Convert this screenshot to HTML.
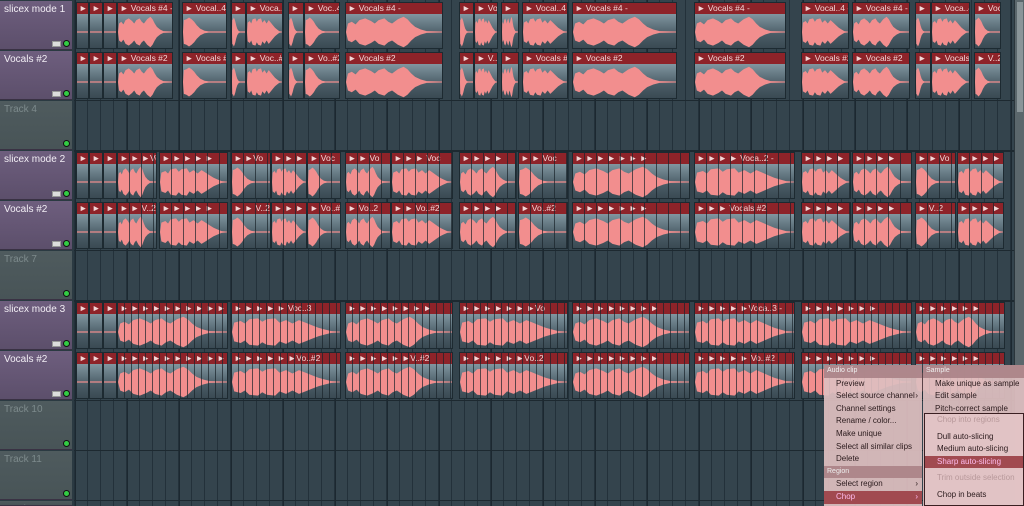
<!DOCTYPE html>
<html style="height:506px;overflow:hidden"><head><meta charset="utf-8"><style>
*{margin:0;padding:0;box-sizing:border-box}
body{width:1024px;height:506px;overflow:hidden;background:#2b3a42;font-family:"Liberation Sans",sans-serif;position:relative}
.hd{position:absolute;left:0;width:72px;height:49px;background:linear-gradient(#6e5e7e,#5c4f6b);border-bottom:1px solid #3a3244;color:#f2eef5;font-size:10px;padding:3px 0 0 4px;overflow:hidden}
.hd.e{background:linear-gradient(#4f5b5e,#485457);color:#7d8a8c}
.hd .k{position:absolute;right:3px;bottom:3px;width:5px;height:5px;border-radius:50%;background:#3c4;box-shadow:0 0 0 1px #111}
.hd .m{position:absolute;right:11px;bottom:2px;width:9px;height:6px;background:#ddd;border:1px solid #999}
.grid{position:absolute;left:74px;top:0;width:940px;height:506px;background:#34444d;
background-image:repeating-linear-gradient(90deg,#23313a 0 1px,transparent 1px 13px),repeating-linear-gradient(90deg,#1c2830 0 2px,transparent 2px 52px)}
.sep{position:absolute;left:74px;width:940px;height:2px;background:#1d2930}
.c{position:absolute;height:47px;background:linear-gradient(#a3b6be 0%,#7a8f99 30%,#4a5c66 70%,#3a4a53 100%);border:1px solid #1d2a31;overflow:hidden}
.c b{display:block;height:11px;background:#8e2329;color:#f3d6d6;font-size:8.5px;font-weight:normal;line-height:11px;padding-left:2px;white-space:nowrap;overflow:hidden}
.c svg{position:absolute;left:0;top:12px;width:100%;height:34px}
.s::after{content:"";position:absolute;left:0;top:0;right:0;bottom:0;background:repeating-linear-gradient(90deg,transparent 0 11px,rgba(25,35,42,.7) 11px 12px)}
.t::after{background:repeating-linear-gradient(90deg,transparent 0 6px,rgba(25,35,42,.7) 6px 7px)}
.sb{position:absolute;left:1014px;top:0;width:10px;height:506px;background:#5b676c;border-left:1px solid #2a353b}
.sb::after{content:"";position:absolute;left:2px;top:2px;width:6px;height:110px;background:#8a9599}
.menu{position:absolute;top:365px;background:rgba(222,190,192,.93);font-size:8px;color:#2a1a1c;font-family:"Liberation Sans",sans-serif;overflow:hidden}
.menu div{height:12.6px;line-height:12.6px;padding-left:12px;white-space:nowrap}
.menu .h{background:rgba(170,130,134,.9);color:#eee;padding-left:3px;font-size:7px}
.menu .d{color:#b8999b}
.menu .on{background:#a14a50;color:#fbe;}
</style></head><body>
<svg width="0" height="0" style="position:absolute">
<symbol id="w1" viewBox="0 0 100 40" preserveAspectRatio="none"><polygon fill="#f28e8e" points="0,20 2,9 8,7 12,10 16,5 24,4 28,8 32,5 40,4 44,9 50,6 56,10 62,6 68,9 74,12 80,15 86,17 92,19 100,19.5 100,20.5 92,21 86,23 80,25 74,28 68,31 62,34 56,30 50,34 44,31 40,36 32,35 28,32 24,36 16,35 12,30 8,33 2,31"/></symbol>
<symbol id="w2" viewBox="0 0 100 40" preserveAspectRatio="none"><polygon fill="#f28e8e" points="0,20 2,6 8,5 14,3 20,5 26,8 32,12 40,16 50,18.5 60,19.3 100,19.3 100,20.7 60,20.7 50,21.5 40,24 32,28 26,32 20,35 14,37 8,35 2,34"/></symbol>
<symbol id="w3" viewBox="0 0 100 40" preserveAspectRatio="none"><polygon fill="#f28e8e" points="0,20 2,10 6,8 10,11 14,6 20,4 26,7 30,10 34,6 40,4 44,8 48,10 54,5 60,2 64,5 68,10 72,14 78,17 84,19 100,19.4 100,20.6 84,21 78,23 72,26 68,30 64,35 60,38 54,35 48,30 44,32 40,36 34,34 30,30 26,33 20,36 14,34 10,29 6,32 2,30"/></symbol>
<symbol id="w0" viewBox="0 0 100 40" preserveAspectRatio="none"><rect fill="#f28e8e" x="0" y="19.3" width="100" height="1.4"/></symbol>
</svg>
<div class="grid"></div>
<div class="sep" style="top:100px;height:1px"></div>
<div class="sep" style="top:150px"></div><div class="sep" style="top:250px;height:1px"></div>
<div class="sep" style="top:300px"></div><div class="sep" style="top:400px;height:1px"></div><div class="sep" style="top:450px;height:1px"></div><div class="sep" style="top:500px;height:1px"></div>

<div class="hd" style="top:1px">slicex mode 1<i class="m"></i><i class="k"></i></div>
<div class="hd" style="top:51px">Vocals #2<i class="m"></i><i class="k"></i></div>
<div class="hd e" style="top:101px">Track 4<i class="k"></i></div>
<div class="hd" style="top:151px">slicex mode 2<i class="m"></i><i class="k"></i></div>
<div class="hd" style="top:201px">Vocals #2<i class="m"></i><i class="k"></i></div>
<div class="hd e" style="top:251px">Track 7<i class="k"></i></div>
<div class="hd" style="top:301px">slicex mode 3<i class="m"></i><i class="k"></i></div>
<div class="hd" style="top:351px">Vocals #2<i class="m"></i><i class="k"></i></div>
<div class="hd e" style="top:401px">Track 10<i class="k"></i></div>
<div class="hd e" style="top:451px">Track 11<i class="k"></i></div>
<div class="hd e" style="top:501px;height:5px">Track 12</div>

<!-- row 1 -->
<div style="position:absolute;top:2px;left:0">
<div class="c" style="left:76px;width:13px"><b>►</b><svg><use href="#w0"/></svg></div>
<div class="c" style="left:89px;width:14px"><b>►</b><svg><use href="#w0"/></svg></div>
<div class="c" style="left:103px;width:14px"><b>►</b><svg><use href="#w0"/></svg></div>
<div class="c" style="left:117px;width:56px"><b>► Vocals #4 -</b><svg><use href="#w3"/></svg></div>
<div class="c" style="left:182px;width:45px"><b>► Vocal..4 -</b><svg><use href="#w2"/></svg></div>
<div class="c" style="left:231px;width:15px"><b>►</b><svg><use href="#w2"/></svg></div>
<div class="c" style="left:246px;width:37px"><b>► Voca..4</b><svg><use href="#w1"/></svg></div>
<div class="c" style="left:288px;width:16px"><b>►</b><svg><use href="#w2"/></svg></div>
<div class="c" style="left:304px;width:36px"><b>► Voc..4</b><svg><use href="#w2"/></svg></div>
<div class="c" style="left:345px;width:98px"><b>► Vocals #4 -</b><svg><use href="#w3"/></svg></div>
<div class="c" style="left:459px;width:15px"><b>►</b><svg><use href="#w2"/></svg></div>
<div class="c" style="left:474px;width:24px"><b>► Vo</b><svg><use href="#w1"/></svg></div>
<div class="c" style="left:501px;width:18px"><b>►</b><svg><use href="#w3"/></svg></div>
<div class="c" style="left:522px;width:46px"><b>► Vocal..4 -</b><svg><use href="#w1"/></svg></div>
<div class="c" style="left:572px;width:105px"><b>► Vocals #4 -</b><svg><use href="#w3"/></svg></div>
<div class="c" style="left:694px;width:92px"><b>► Vocals #4 -</b><svg><use href="#w3"/></svg></div>
<div class="c" style="left:801px;width:48px"><b>► Vocal..4 -</b><svg><use href="#w1"/></svg></div>
<div class="c" style="left:852px;width:58px"><b>► Vocals #4 -</b><svg><use href="#w3"/></svg></div>
<div class="c" style="left:915px;width:16px"><b>►</b><svg><use href="#w2"/></svg></div>
<div class="c" style="left:931px;width:39px"><b>► Voca..4 -</b><svg><use href="#w1"/></svg></div>
<div class="c" style="left:974px;width:27px"><b>► Voc</b><svg><use href="#w2"/></svg></div>
</div>
<!-- row 2 -->
<div style="position:absolute;top:52px;left:0">
<div class="c" style="left:76px;width:13px"><b>►</b><svg><use href="#w0"/></svg></div>
<div class="c" style="left:89px;width:14px"><b>►</b><svg><use href="#w0"/></svg></div>
<div class="c" style="left:103px;width:14px"><b>►</b><svg><use href="#w0"/></svg></div>
<div class="c" style="left:117px;width:56px"><b>► Vocals #2</b><svg><use href="#w3"/></svg></div>
<div class="c" style="left:182px;width:45px"><b>► Vocals #2</b><svg><use href="#w2"/></svg></div>
<div class="c" style="left:231px;width:15px"><b>►</b><svg><use href="#w2"/></svg></div>
<div class="c" style="left:246px;width:37px"><b>► Voc..#2</b><svg><use href="#w1"/></svg></div>
<div class="c" style="left:288px;width:16px"><b>►</b><svg><use href="#w2"/></svg></div>
<div class="c" style="left:304px;width:36px"><b>► Vo..#2</b><svg><use href="#w2"/></svg></div>
<div class="c" style="left:345px;width:98px"><b>► Vocals #2</b><svg><use href="#w3"/></svg></div>
<div class="c" style="left:459px;width:15px"><b>►</b><svg><use href="#w2"/></svg></div>
<div class="c" style="left:474px;width:24px"><b>► V..2</b><svg><use href="#w1"/></svg></div>
<div class="c" style="left:501px;width:18px"><b>►</b><svg><use href="#w3"/></svg></div>
<div class="c" style="left:522px;width:46px"><b>► Vocals #2</b><svg><use href="#w1"/></svg></div>
<div class="c" style="left:572px;width:105px"><b>► Vocals #2</b><svg><use href="#w3"/></svg></div>
<div class="c" style="left:694px;width:92px"><b>► Vocals #2</b><svg><use href="#w3"/></svg></div>
<div class="c" style="left:801px;width:48px"><b>► Vocals #2</b><svg><use href="#w1"/></svg></div>
<div class="c" style="left:852px;width:58px"><b>► Vocals #2</b><svg><use href="#w3"/></svg></div>
<div class="c" style="left:915px;width:16px"><b>►</b><svg><use href="#w2"/></svg></div>
<div class="c" style="left:931px;width:39px"><b>► Vocals #2</b><svg><use href="#w1"/></svg></div>
<div class="c" style="left:974px;width:27px"><b>► V..2</b><svg><use href="#w2"/></svg></div>
</div>
<!-- rows 4,5 -->
<div style="position:absolute;top:152px;left:0">
<div class="c" style="left:76px;width:13px"><b>►</b><svg><use href="#w0"/></svg></div>
<div class="c" style="left:89px;width:14px"><b>►</b><svg><use href="#w0"/></svg></div>
<div class="c" style="left:103px;width:14px"><b>►</b><svg><use href="#w0"/></svg></div>
<div class="c s" style="left:117px;width:40px"><b>► ► ►Vo</b><svg><use href="#w3"/></svg></div>
<div class="c s" style="left:159px;width:69px"><b>► ► ► ► ►</b><svg><use href="#w1"/></svg></div>
<div class="c s" style="left:231px;width:40px"><b>► ►Vo</b><svg><use href="#w2"/></svg></div>
<div class="c s" style="left:271px;width:36px"><b>► ► ►</b><svg><use href="#w1"/></svg></div>
<div class="c s" style="left:307px;width:34px"><b>► Voc</b><svg><use href="#w2"/></svg></div>
<div class="c s" style="left:345px;width:46px"><b>► ► Vo</b><svg><use href="#w3"/></svg></div>
<div class="c s" style="left:391px;width:62px"><b>► ► ► Voc</b><svg><use href="#w1"/></svg></div>
<div class="c s" style="left:459px;width:57px"><b>► ► ► ►</b><svg><use href="#w3"/></svg></div>
<div class="c s" style="left:518px;width:50px"><b>► ► Voc</b><svg><use href="#w2"/></svg></div>
<div class="c s" style="left:572px;width:118px"><b>► ► ► ► ► ► ►</b><svg><use href="#w3"/></svg></div>
<div class="c s" style="left:694px;width:101px"><b>► ► ► ► Voca..2 -</b><svg><use href="#w1"/></svg></div>
<div class="c s" style="left:801px;width:50px"><b>► ► ► ►</b><svg><use href="#w1"/></svg></div>
<div class="c s" style="left:852px;width:60px"><b>► ► ► ►</b><svg><use href="#w3"/></svg></div>
<div class="c s" style="left:915px;width:41px"><b>► ► Vo</b><svg><use href="#w2"/></svg></div>
<div class="c s" style="left:957px;width:47px"><b>► ► ► ►</b><svg><use href="#w1"/></svg></div>
</div>
<div style="position:absolute;top:202px;left:0">
<div class="c" style="left:76px;width:13px"><b>►</b><svg><use href="#w0"/></svg></div>
<div class="c" style="left:89px;width:14px"><b>►</b><svg><use href="#w0"/></svg></div>
<div class="c" style="left:103px;width:14px"><b>►</b><svg><use href="#w0"/></svg></div>
<div class="c s" style="left:117px;width:40px"><b>► ► V..2</b><svg><use href="#w3"/></svg></div>
<div class="c s" style="left:159px;width:69px"><b>► ► ► ► ►</b><svg><use href="#w1"/></svg></div>
<div class="c s" style="left:231px;width:40px"><b>► ► V..2</b><svg><use href="#w2"/></svg></div>
<div class="c s" style="left:271px;width:36px"><b>► ► ►</b><svg><use href="#w1"/></svg></div>
<div class="c s" style="left:307px;width:34px"><b>► Vo..#2</b><svg><use href="#w2"/></svg></div>
<div class="c s" style="left:345px;width:46px"><b>► Vo..2</b><svg><use href="#w3"/></svg></div>
<div class="c s" style="left:391px;width:62px"><b>► ► Vo..#2</b><svg><use href="#w1"/></svg></div>
<div class="c s" style="left:459px;width:57px"><b>► ► ► ►</b><svg><use href="#w3"/></svg></div>
<div class="c s" style="left:518px;width:50px"><b>► Vo..#2</b><svg><use href="#w2"/></svg></div>
<div class="c s" style="left:572px;width:118px"><b>► ► ► ► ► ► ►</b><svg><use href="#w3"/></svg></div>
<div class="c s" style="left:694px;width:101px"><b>► ► ► Vocals #2</b><svg><use href="#w1"/></svg></div>
<div class="c s" style="left:801px;width:50px"><b>► ► ► ►</b><svg><use href="#w1"/></svg></div>
<div class="c s" style="left:852px;width:60px"><b>► ► ► ►</b><svg><use href="#w3"/></svg></div>
<div class="c s" style="left:915px;width:41px"><b>► V..2</b><svg><use href="#w2"/></svg></div>
<div class="c s" style="left:957px;width:47px"><b>► ► ► ►</b><svg><use href="#w1"/></svg></div>
</div>
<!-- rows 7,8 -->
<div style="position:absolute;top:302px;left:0">
<div class="c" style="left:76px;width:13px"><b>►</b><svg><use href="#w0"/></svg></div>
<div class="c" style="left:89px;width:14px"><b>►</b><svg><use href="#w0"/></svg></div>
<div class="c" style="left:103px;width:14px"><b>►</b><svg><use href="#w0"/></svg></div>
<div class="c s t" style="left:117px;width:111px"><b>► ► ► ► ► ► ► ► ► ►</b><svg><use href="#w3"/></svg></div>
<div class="c s t" style="left:231px;width:110px"><b>► ► ► ► ► Voc..3</b><svg><use href="#w1"/></svg></div>
<div class="c s t" style="left:345px;width:108px"><b>► ► ► ► ► ► ► ►</b><svg><use href="#w3"/></svg></div>
<div class="c s t" style="left:459px;width:109px"><b>► ► ► ► ► ► ►Vo</b><svg><use href="#w1"/></svg></div>
<div class="c s t" style="left:572px;width:118px"><b>► ► ► ► ► ► ► ►</b><svg><use href="#w3"/></svg></div>
<div class="c s t" style="left:694px;width:101px"><b>► ► ► ► ►Voca..3 -</b><svg><use href="#w1"/></svg></div>
<div class="c s t" style="left:801px;width:111px"><b>► ► ► ► ► ► ►</b><svg><use href="#w1"/></svg></div>
<div class="c s t" style="left:915px;width:90px"><b>► ► ► ► ► ►</b><svg><use href="#w3"/></svg></div>
</div>
<div style="position:absolute;top:352px;left:0">
<div class="c" style="left:76px;width:13px"><b>►</b><svg><use href="#w0"/></svg></div>
<div class="c" style="left:89px;width:14px"><b>►</b><svg><use href="#w0"/></svg></div>
<div class="c" style="left:103px;width:14px"><b>►</b><svg><use href="#w0"/></svg></div>
<div class="c s t" style="left:117px;width:111px"><b>► ► ► ► ► ► ► ► ► ►</b><svg><use href="#w3"/></svg></div>
<div class="c s t" style="left:231px;width:110px"><b>► ► ► ► ► ►Vo..#2</b><svg><use href="#w1"/></svg></div>
<div class="c s t" style="left:345px;width:108px"><b>► ► ► ► ► ►V..#2</b><svg><use href="#w3"/></svg></div>
<div class="c s t" style="left:459px;width:109px"><b>► ► ► ► ► ►Vo..2</b><svg><use href="#w1"/></svg></div>
<div class="c s t" style="left:572px;width:118px"><b>► ► ► ► ► ► ► ►</b><svg><use href="#w3"/></svg></div>
<div class="c s t" style="left:694px;width:101px"><b>► ► ► ► ► Vo..#2</b><svg><use href="#w1"/></svg></div>
<div class="c s t" style="left:801px;width:111px"><b>► ► ► ► ► ► ►</b><svg><use href="#w1"/></svg></div>
<div class="c s t" style="left:915px;width:90px"><b>► ► ► ► ► ►</b><svg><use href="#w3"/></svg></div>
</div>

<div class="sb"></div>

<div class="menu" style="left:824px;width:98px;height:141px">
<div class="h">Audio clip</div>
<div>Preview</div>
<div>Select source channel <span style="float:right;padding-right:4px">›</span></div>
<div>Channel settings</div>
<div>Rename / color...</div>
<div>Make unique</div>
<div>Select all similar clips</div>
<div>Delete</div>
<div class="h">Region</div>
<div>Select region <span style="float:right;padding-right:4px">›</span></div>
<div class="on">Chop <span style="float:right;padding-right:4px">›</span></div>
</div>
<div class="menu" style="left:923px;width:101px;height:141px">
<div class="h">Sample</div>
<div>Make unique as sample</div>
<div>Edit sample</div>
<div>Pitch-correct sample</div>
</div>
<div class="menu" style="left:924px;top:413px;width:100px;height:93px;border:1px solid #3a1f22;background:rgba(226,196,198,.96)">
<div class="d">Chop into regions</div>
<div style="height:4px"></div>
<div>Dull auto-slicing</div>
<div>Medium auto-slicing</div>
<div class="on">Sharp auto-slicing</div>
<div style="height:4px"></div>
<div class="d">Trim outside selection</div>
<div style="height:4px"></div>
<div>Chop in beats</div>
</div>
</body></html>
